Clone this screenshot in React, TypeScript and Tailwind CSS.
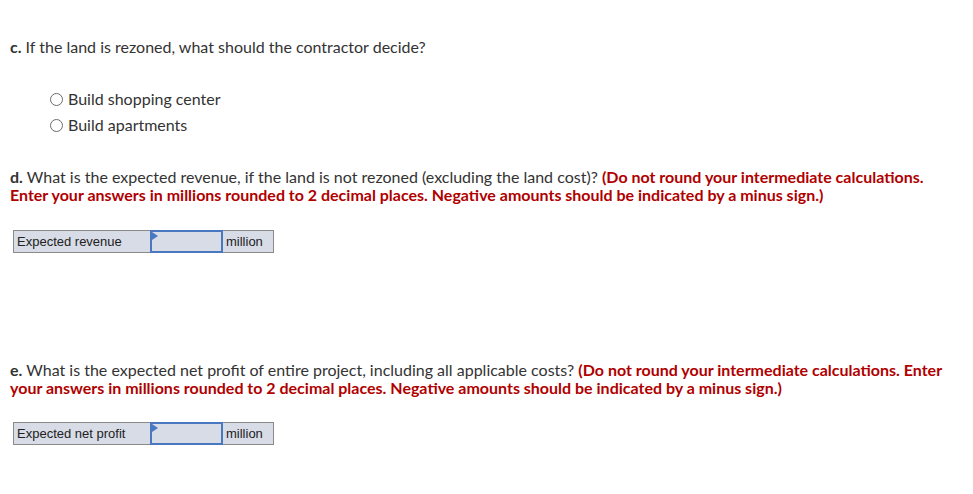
import React from "react";

function Radio({ label }: { label: string }) {
  return (
    <label className="flex items-center h-[26px]">
      <span className="w-[13px] h-[13px] rounded-full border border-[#6b6b6b] bg-white mr-[5px]" />
      <span>{label}</span>
    </label>
  );
}

function AnswerRow({ label }: { label: string }) {
  return (
    <div className="flex h-[23px] font-['Liberation_Sans',Arial,sans-serif] text-[13px] text-[#222]">
      <div className="w-[138px] border border-[#8a8a8a] bg-[#d8dce6] px-[3px] flex items-center">
        {label}
      </div>
      <div className="relative w-[73px] border-2 border-[#4a78c0] bg-[#d8dce6] -ml-px">
        <span className="absolute left-0 top-0 w-0 h-0 border-t-[4px] border-b-[4px] border-l-[6px] border-t-transparent border-b-transparent border-l-[#4a78c0]" />
      </div>
      <div className="w-[52px] border border-[#8a8a8a] bg-[#d8dce6] px-[3px] flex items-center -ml-px">
        million
      </div>
    </div>
  );
}

export default function App() {
  return (
    <div className="w-[973px] h-[494px] bg-white text-[#333] font-['Lato',sans-serif] text-[16px] px-[10px] pt-[38px]">
      <p className="leading-[18px]">
        <b>c.</b> If the land is rezoned, what should the contractor decide?
      </p>
      <div className="pl-[40px] pt-[30px]">
        <Radio label="Build shopping center" />
        <Radio label="Build apartments" />
      </div>

      <div className="pt-[30px] leading-[18px] whitespace-nowrap">
        <p>
          <b>d.</b> What is the expected revenue, if the land is not rezoned (excluding the land cost)?{" "}
          <b className="text-[#b00000]">(Do not round your intermediate calculations.</b>
        </p>
        <p className="font-bold text-[#b00000]">
          Enter your answers in millions rounded to 2 decimal places. Negative amounts should be indicated by a minus sign.)
        </p>
      </div>
      <div className="pt-[26px] pl-[3px]">
        <AnswerRow label="Expected revenue" />
      </div>

      <div className="pt-[108px] leading-[18px] whitespace-nowrap">
        <p>
          <b>e.</b> What is the expected net profit of entire project, including all applicable costs?{" "}
          <b className="text-[#b00000]">(Do not round your intermediate calculations. Enter</b>
        </p>
        <p className="font-bold text-[#b00000]">
          your answers in millions rounded to 2 decimal places. Negative amounts should be indicated by a minus sign.)
        </p>
      </div>
      <div className="pt-[25px] pl-[3px]">
        <AnswerRow label="Expected net profit" />
      </div>
    </div>
  );
}
